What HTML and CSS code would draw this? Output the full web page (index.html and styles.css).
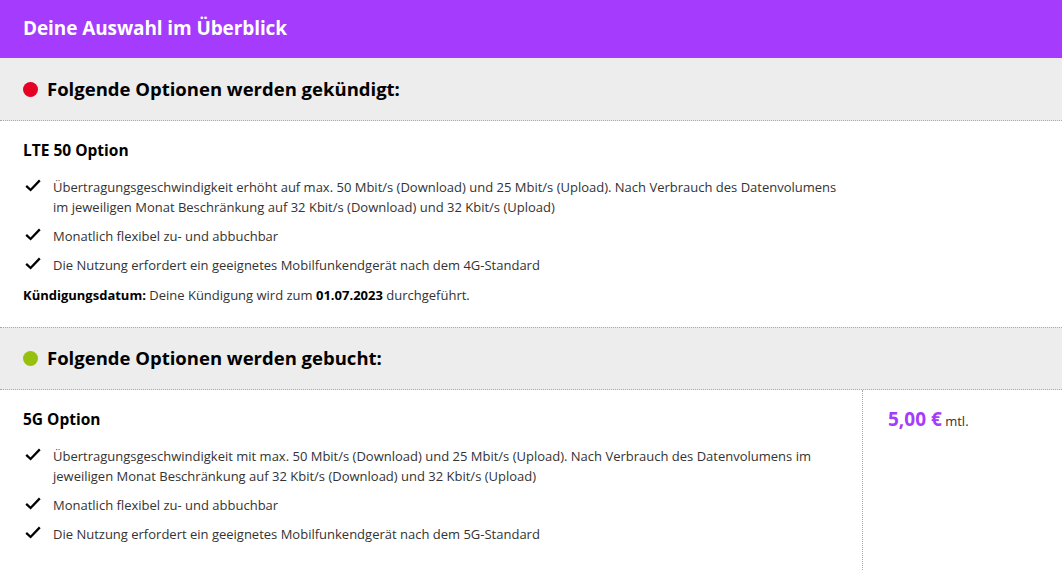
FILE: index.html
```html
<!DOCTYPE html>
<html lang="de">
<head>
<meta charset="utf-8">
<title>Deine Auswahl im Überblick</title>
<link rel="stylesheet" href="styles.css">
</head>
<body>
<div class="page">
  <header class="topbar"><h1 class="topbar-title">Deine Auswahl im Überblick</h1></header>

  <div class="section-head">
    <span class="dot dot-red"></span>
    <h2 class="section-title">Folgende Optionen werden gekündigt:</h2>
  </div>
  <div class="section-body">
    <div class="col-main">
      <h3 class="option-title">LTE 50 Option</h3>
      <ul class="features">
        <li class="feature"><svg class="check" viewBox="0 0 16 13"><path d="M1.2 6.8 L5.6 11 L14.8 1.4" fill="none" stroke="#000" stroke-width="2.3"/></svg><span>Übertragungsgeschwindigkeit erhöht auf max. 50 Mbit/s (Download) und 25 Mbit/s (Upload). Nach Verbrauch des Datenvolumens im jeweiligen Monat Beschränkung auf 32 Kbit/s (Download) und 32 Kbit/s (Upload)</span></li>
        <li class="feature"><svg class="check" viewBox="0 0 16 13"><path d="M1.2 6.8 L5.6 11 L14.8 1.4" fill="none" stroke="#000" stroke-width="2.3"/></svg><span>Monatlich flexibel zu- und abbuchbar</span></li>
        <li class="feature"><svg class="check" viewBox="0 0 16 13"><path d="M1.2 6.8 L5.6 11 L14.8 1.4" fill="none" stroke="#000" stroke-width="2.3"/></svg><span>Die Nutzung erfordert ein geeignetes Mobilfunkendgerät nach dem 4G-Standard</span></li>
      </ul>
      <p class="note"><b>Kündigungsdatum:</b> Deine Kündigung wird zum <b>01.07.2023</b> durchgeführt.</p>
    </div>
  </div>

  <div class="section-head section-head-2">
    <span class="dot dot-green"></span>
    <h2 class="section-title">Folgende Optionen werden gebucht:</h2>
  </div>
  <div class="section-split">
    <div class="col-left">
      <h3 class="option-title">5G Option</h3>
      <ul class="features">
        <li class="feature"><svg class="check" viewBox="0 0 16 13"><path d="M1.2 6.8 L5.6 11 L14.8 1.4" fill="none" stroke="#000" stroke-width="2.3"/></svg><span>Übertragungsgeschwindigkeit mit max. 50 Mbit/s (Download) und 25 Mbit/s (Upload). Nach Verbrauch des Datenvolumens im jeweiligen Monat Beschränkung auf 32 Kbit/s (Download) und 32 Kbit/s (Upload)</span></li>
        <li class="feature"><svg class="check" viewBox="0 0 16 13"><path d="M1.2 6.8 L5.6 11 L14.8 1.4" fill="none" stroke="#000" stroke-width="2.3"/></svg><span>Monatlich flexibel zu- und abbuchbar</span></li>
        <li class="feature"><svg class="check" viewBox="0 0 16 13"><path d="M1.2 6.8 L5.6 11 L14.8 1.4" fill="none" stroke="#000" stroke-width="2.3"/></svg><span>Die Nutzung erfordert ein geeignetes Mobilfunkendgerät nach dem 5G-Standard</span></li>
      </ul>
    </div>
    <div class="col-price">
      <span class="price">5,00 €</span> <span class="price-unit">mtl.</span>
    </div>
  </div>
</div>
</body>
</html>
```

FILE: styles.css
```css
* { box-sizing: border-box; }
html, body { margin: 0; padding: 0; background: #fff; }
body {
  font-family: "Open Sans", "Liberation Sans", sans-serif;
  color: #333;
  font-size: 13px;
}
.page { width: 1062px; }
.topbar {
  background: #a53bfd;
  height: 58px;
  display: flex;
  align-items: center;
  padding: 0 23px;
}
.topbar-title {
  margin: 0;
  color: #fff;
  font-size: 19px;
  font-weight: 700;
  line-height: 1;
  padding-bottom: 2px;
  letter-spacing: -0.1px;
}
.section-head {
  background: #ededed;
  height: 63px;
  display: flex;
  align-items: center;
  padding: 0 23px;
  border-bottom: 1px dotted #aaa;
}
.section-head-2 { border-top: 1px dotted #aaa; height: 63px; }
.dot {
  width: 15px;
  height: 15px;
  border-radius: 50%;
  margin-right: 9px;
  flex: none;
}
.dot-red { background: #e60023; }
.dot-green { background: #97c00e; }
.section-title {
  margin: 0;
  font-size: 18.5px;
  font-weight: 700;
  color: #000;
  line-height: 1;
}
.section-body { padding: 19px 23px 22px; }
.col-main { width: 823px; }
.section-split { display: flex; }
.col-left {
  width: 863px;
  flex: none;
  padding: 19px 17px 30px 23px;
  border-right: 1px dotted #aaa;
}
.col-price { padding: 19px 25px; line-height: 20px; white-space: nowrap; }
.option-title {
  margin: 0 0 17px;
  font-size: 15.5px;
  font-weight: 700;
  color: #000;
  line-height: 20px;
}
.features { list-style: none; margin: 0; padding: 0; }
.feature {
  display: flex;
  align-items: flex-start;
  line-height: 20px;
  margin-bottom: 9px;
}
.feature:last-child { margin-bottom: 0; }
.check { width: 16px; height: 13px; flex: none; margin: 2px 12px 0 2px; }
.note { margin: 10px 0 0; line-height: 20px; }
.note b { color: #000; }
.price { color: #a53bfd; font-weight: 700; font-size: 19px; }
.price-unit { font-size: 13px; color: #333; }
```
